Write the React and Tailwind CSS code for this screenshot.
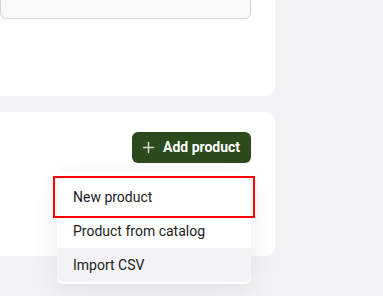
import { Plus } from 'lucide-react';

function App() {
  const items = ['New product', 'Product from catalog', 'Import CSV'];

  return (
    <div
      className="h-[296px] w-[383px] overflow-hidden bg-[#f3f3f5]"
      style={{ fontFamily: 'Roboto, "Liberation Sans", sans-serif' }}
    >
      {/* Top card */}
      <div className="-mt-[30px] h-[126px] w-[275px] rounded-r-lg bg-white pr-[24px]">
        <div className="h-[49px] w-full rounded-b-md border border-[#d6d6d6] bg-[#fafafa]" />
      </div>

      {/* Products card */}
      <div className="mt-[16px] flex h-[144px] w-[275px] justify-end rounded-r-lg bg-white pr-[24px] pt-[20px]">
        <div className="relative h-[31px]">
          <button className="flex h-[31px] w-[119px] items-center gap-[6px] rounded-md bg-[#2c4a1b] pl-[8px] text-[14px] font-bold text-white">
            <Plus size={17} strokeWidth={2.2} className="text-[#d3d8cf]" />
            Add product
          </button>

          {/* Dropdown */}
          <div className="absolute right-0 top-[40px] w-[194px] rounded-md bg-white pb-[2px] pt-[8px] shadow-[0_6px_28px_rgba(0,0,0,0.08)]">
            {items.map((label, i) => (
              <div
                key={label}
                className={`flex h-[34px] items-center pl-[16px] text-[14px] text-[#1b1b1b] ${
                  i === 0 ? 'outline-2 outline-offset-2 outline-[#ff0000]' : ''
                } ${i === 2 ? 'rounded-b-md bg-[#f3f3f5]' : ''}`}
              >
                {label}
              </div>
            ))}
          </div>
        </div>
      </div>
    </div>
  );
}

export default App;
